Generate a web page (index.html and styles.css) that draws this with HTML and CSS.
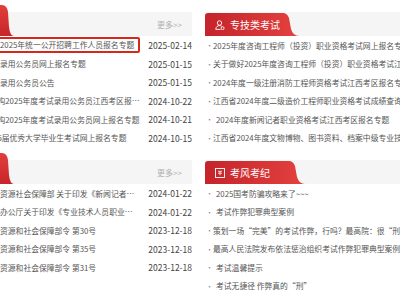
FILE: index.html
```html
<!DOCTYPE html>
<html>
	<head>
		<meta charset="utf-8">
		<link rel="stylesheet" href="styles.css">
	</head>
	<body>
		<div class="page">
			<div class="col col-left">
				<div class="panel">
					<div class="bar">
						<svg class="tab-end" width="14" height="31" viewBox="0 0 14 31"><defs><linearGradient id="ga" x1="0" y1="0" x2="0" y2="1"><stop offset="0" stop-color="#e0403c"/><stop offset="1" stop-color="#c8242a"/></linearGradient></defs><path d="M0 0 H2 Q7 0 8 7 L9 22 Q10 31 14 31 H0 Z" fill="url(#ga)"/></svg>
						<a class="more">更多&gt;&gt;</a>
					</div>
					<ul class="news">
						<li class="hl"><span class="title"><span class="mark">全省2025年统一公开招聘工作人员报名专题</span></span><span class="date">2025-02-14</span></li>
						<li><span class="title">考试录用公务员网上报名专题</span><span class="date">2025-01-15</span></li>
						<li><span class="title">考试录用公务员公告</span><span class="date">2025-01-15</span></li>
						<li><span class="title">&nbsp;&nbsp;&nbsp;机构2025年度考试录用公务员江西考区报名专题</span><span class="date">2024-10-22</span></li>
						<li><span class="title">&nbsp;&nbsp;&nbsp;机构2025年度考试录用公务员网上报名专题</span><span class="date">2024-10-21</span></li>
						<li><span class="title">2025届优秀大学毕业生考试网上报名专题</span><span class="date">2024-10-15</span></li>
					</ul>
				</div>
				<div class="panel">
					<div class="bar">
						<svg class="tab-end" width="14" height="31" viewBox="0 0 14 31"><defs><linearGradient id="gb" x1="0" y1="0" x2="0" y2="1"><stop offset="0" stop-color="#e0403c"/><stop offset="1" stop-color="#c8242a"/></linearGradient></defs><path d="M0 0 H2 Q7 0 8 7 L9 22 Q10 31 14 31 H0 Z" fill="url(#gb)"/></svg>
						<a class="more">更多&gt;&gt;</a>
					</div>
					<ul class="news">
						<li><span class="title">人力资源社会保障部 关于印发《新闻记者职业资格制度规定》</span><span class="date">2024-01-22</span></li>
						<li><span class="title">人社办公厅关于印发《专业技术人员职业资格目录》</span><span class="date">2024-01-22</span></li>
						<li><span class="title">人力资源和社会保障部令 第30号</span><span class="date">2023-12-18</span></li>
						<li><span class="title">人力资源和社会保障部令 第35号</span><span class="date">2023-12-18</span></li>
						<li><span class="title">人力资源和社会保障部令 第31号</span><span class="date">2023-12-18</span></li>
					</ul>
				</div>
			</div>
			<div class="col col-right">
				<div class="panel">
					<div class="bar">
						<div class="tab tab-a">
							<svg width="10" height="10" viewBox="0 0 10 10"><circle cx="4.5" cy="3" r="2.2" fill="none" stroke="#fff" stroke-width="0.9"/><path d="M0.8 9.4 C0.8 6.8 2.5 5.6 4.5 5.6 C5.4 5.6 6.2 5.8 6.8 6.3" fill="none" stroke="#fff" stroke-width="0.9"/><path d="M0.8 9.4 H5.5" stroke="#fff" stroke-width="0.9"/><circle cx="7.6" cy="8.2" r="1.5" fill="none" stroke="#fff" stroke-width="0.9"/></svg>
							<span>专技类考试</span>
						</div>
					</div>
					<ul class="news">
						<li>2025年度咨询工程师（投资）职业资格考试网上报名专题</li>
						<li>关于做好2025年度咨询工程师（投资）职业资格考试江西考区报名工作的通知</li>
						<li>2024年度一级注册消防工程师资格考试江西考区报名专题</li>
						<li>江西省2024年度二级造价工程师职业资格考试成绩查询</li>
						<li>2024年度新闻记者职业资格考试江西考区报名专题</li>
						<li>江西省2024年度文物博物、图书资料、档案中级专业技术资格考试</li>
					</ul>
				</div>
				<div class="panel">
					<div class="bar">
						<div class="tab tab-b">
							<svg width="10" height="10" viewBox="0 0 10 10"><rect x="0.5" y="0.5" width="9" height="9" fill="none" stroke="#fff" stroke-width="0.9"/><path d="M3 3.3 H7 M3 5.2 H7 M5 3.3 V7.2" fill="none" stroke="#fff" stroke-width="0.8"/></svg>
							<span>考风考纪</span>
						</div>
					</div>
					<ul class="news">
						<li>2025国考防骗攻略来了~~~</li>
						<li>考试作弊犯罪典型案例</li>
						<li>策划一场“完美”的考试作弊，行吗？最高院：很“刑”！</li>
						<li>最高人民法院发布依法惩治组织考试作弊犯罪典型案例</li>
						<li>考试温馨提示</li>
						<li>考试无捷径 作弊真的“刑”</li>
					</ul>
				</div>
			</div>
		</div>
	</body>
</html>
```

FILE: styles.css
```css
body {
	margin: 0;
	overflow: hidden;
	background: #ffffff;
	font-family: "Noto Sans CJK SC", "Noto Sans", sans-serif;
}

.page {
	display: flex;
	gap: 13px;
	padding-top: 12px;
}

.col-left {
	width: 192px;
	flex: none;
}

.col-right {
	flex: 1;
	min-width: 0;
	overflow: hidden;
}

.panel + .panel {
	margin-top: 13px;
}

.bar {
	display: flex;
	align-items: flex-end;
	justify-content: space-between;
	height: 24px;
	background: #f5f5f5;
}

.tab-end {
	display: block;
	flex: none;
}

.tab {
	display: flex;
	align-items: center;
	gap: 5px;
	height: 23px;
	padding-left: 10px;
	box-sizing: border-box;
	color: #ffffff;
	font-size: 10px;
	background: linear-gradient(90deg, #c4242a, #e4413f);
}

.tab svg {
	flex: none;
}

.tab-a {
	width: 94px;
	clip-path: path('M0 3 Q0 0 3 0 H78 Q82 0 84 5 L86 16 Q88 23 94 23 H0 Z');
}

.tab-b {
	width: 100px;
	clip-path: path('M0 3 Q0 0 3 0 H84 Q88 0 90 5 L92 16 Q94 23 100 23 H0 Z');
}

.more {
	align-self: center;
	margin-right: 10px;
	color: #b0b0b0;
	font-size: 8px;
}

.news {
	list-style: none;
	margin: 0;
	padding: 0;
}

.news li {
	display: flex;
	align-items: center;
	height: 18.5px;
	color: #555555;
	font-size: 7.8px;
	white-space: nowrap;
}

.col-right .news li::before {
	content: "•";
	width: 10px;
	padding-left: 1px;
	color: #888888;
	font-size: 7px;
}

/* titles start a little left of the viewport edge, as in the scrolled page */
.title {
	flex: none;
	width: 155.6px;
	margin-left: -15.6px;
	overflow: hidden;
	text-overflow: ellipsis;
}

.hl .title {
	overflow: visible;
}

.mark {
	display: block;
	margin-left: -2px;
	border: 2px solid #d9261c;
	border-radius: 2px;
	line-height: 12px;
}

.date {
	margin-left: auto;
	color: #444444;
	font-size: 8.5px;
}
```
